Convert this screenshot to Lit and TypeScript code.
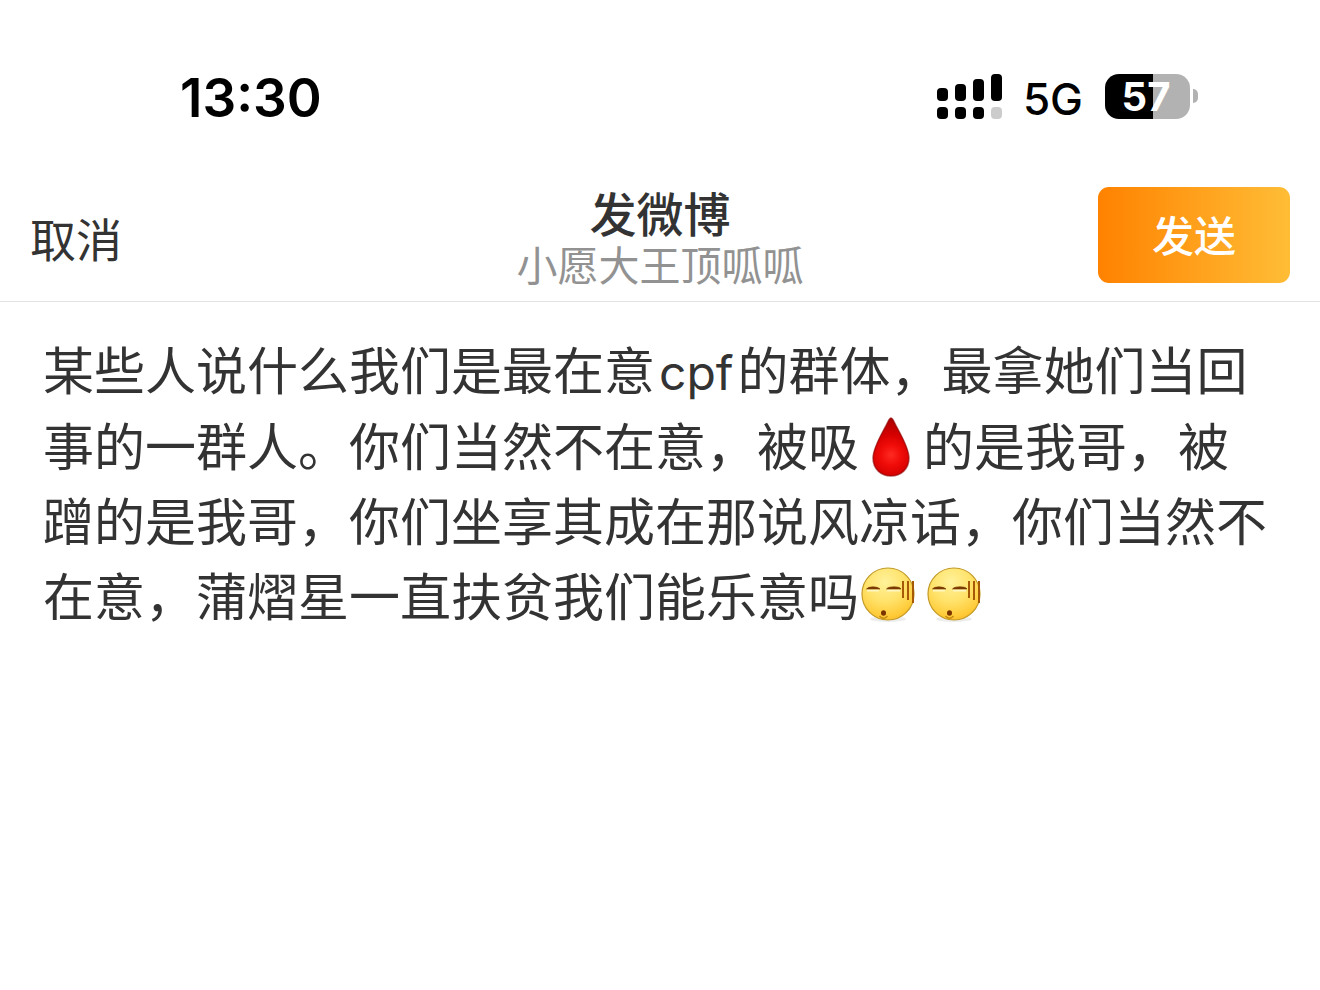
import { LitElement, html, css, svg } from "lit";
import { customElement, property } from "lit/decorators.js";

@customElement("status-bar")
class StatusBar extends LitElement {
  @property() time = "13:30";
  @property({ type: Number }) battery = 57;

  static styles = css`
    :host {
      display: flex;
      align-items: center;
      justify-content: space-between;
      height: 64px;
      padding: 66px 122px 0 180px;
      color: #000;
      font-family: Inter, "Liberation Sans", sans-serif;
    }
    .time {
      font-size: 53px;
      line-height: 64px;
      font-weight: 600;
    }
    .right {
      display: flex;
      align-items: center;
      padding-bottom: 4px;
    }
    .signal {
      display: block;
      width: 65px;
      height: 45px;
    }
    .network {
      margin: 6px 22px 0 21px;
      font-size: 44px;
      line-height: 58px;
      font-weight: 450;
    }
    .battery {
      display: flex;
      align-items: center;
      gap: 3px;
    }
    .cell {
      display: flex;
      align-items: center;
      justify-content: center;
      box-sizing: border-box;
      width: 85px;
      height: 45px;
      padding-right: 3px;
      border-radius: 14px;
      color: #fff;
      font-size: 40px;
      line-height: 45px;
      font-weight: 650;
    }
    .tip {
      width: 5px;
      height: 14px;
      border-radius: 0 5px 5px 0;
      background: #b2b2b2;
    }
  `;

  render() {
    const bars = [
      { x: 0, y: 14, h: 13 },
      { x: 18, y: 10, h: 17 },
      { x: 36, y: 5, h: 22 },
      { x: 54, y: 0, h: 27 },
    ];
    return html`
      <span class="time">${this.time}</span>
      <div class="right">
        <svg class="signal" viewBox="0 0 65 45" aria-hidden="true">
          ${bars.map(
            (b, i) => svg`
              <rect x=${b.x} y=${b.y} width="11" height=${b.h} rx="4"></rect>
              <rect x=${b.x} y="33" width="11" height="12" rx="4" fill=${i === 3 ? "#ccc" : "#000"}></rect>`
          )}
        </svg>
        <span class="network">5G</span>
        <div class="battery">
          <span
            class="cell"
            style="background: linear-gradient(90deg, #000 ${this.battery}%, #b2b2b2 ${this.battery}%)"
            >${this.battery}</span
          >
          <span class="tip"></span>
        </div>
      </div>
    `;
  }
}

@customElement("blood-drop")
class BloodDrop extends LitElement {
  static styles = css`
    :host {
      display: inline-block;
      width: 64px;
      height: 60px;
      vertical-align: -11px;
    }
    .drop {
      display: block;
      width: 38px;
      height: 60px;
      margin: 0 auto;
    }
  `;
  render() {
    return html`
      <svg class="drop" viewBox="0 0 38 60" role="img" aria-label="血">
        <defs>
          <radialGradient id="g" cx="19" cy="38" r="42" gradientUnits="userSpaceOnUse">
            <stop offset="0" stop-color="#ff2a22"></stop>
            <stop offset="0.25" stop-color="#f00c08"></stop>
            <stop offset="0.5" stop-color="#d40000"></stop>
            <stop offset="1" stop-color="#9c0000"></stop>
          </radialGradient>
        </defs>
        <path
          d="M19 1C20 1 21 2.500 22 4.500C27 15 37 30 37 41C37 52 29 59 19 59S1 52 1 41C1 30 11 15 16 4.500C17 2.500 18 1 19 1Z"
          fill="url(#g)"
          stroke="#8a0000"
          stroke-opacity=".6"
          stroke-width="1.500"
        ></path>
      </svg>
    `;
  }
}

@customElement("speechless-face")
class SpeechlessFace extends LitElement {
  static styles = css`
    :host {
      display: inline-block;
      width: 66px;
      height: 58px;
      vertical-align: -8px;
    }
    .face {
      display: block;
      width: 58px;
      height: 58px;
    }
  `;
  render() {
    return html`
      <svg class="face" viewBox="0 0 58 58" role="img" aria-label="无语">
        <defs>
          <radialGradient id="skin" cx="26" cy="16" r="44" gradientUnits="userSpaceOnUse">
            <stop offset="0" stop-color="#fff29a"></stop>
            <stop offset="0.45" stop-color="#ffe26a"></stop>
            <stop offset="0.8" stop-color="#ffc935"></stop>
            <stop offset="1" stop-color="#f0a820"></stop>
          </radialGradient>
        </defs>
        <ellipse cx="29" cy="53" rx="18" ry="3" fill="#000" opacity=".07"></ellipse>
        <circle cx="29" cy="28" r="26" fill="url(#skin)" stroke="#c39a26" stroke-width="1.200"></circle>
        <path d="M8 24.500h12M28 24.500h13" stroke="#fff6c0" stroke-width="2"></path>
        <path d="M7.500 23Q9 20.800 14 20.800T21 23zM27.500 23Q29 20.800 35 20.800T42 23z" fill="#7a3a00" stroke="#7a3a00" stroke-width=".6"></path>
        <path d="M44 15v17M49 15v19M54 15v22" stroke="#a65a08" stroke-width="2"></path>
        <path d="M20.500 50q4 4.500 8 0" stroke="#c98c14" stroke-width="1.500" fill="none"></path>
        <ellipse cx="24.500" cy="47" rx="2.500" ry="2.800" fill="#7a3200"></ellipse>
      </svg>
    `;
  }
}

@customElement("app-root")
class AppRoot extends LitElement {
  static styles = css`
    :host {
      display: flex;
      flex-direction: column;
      min-height: 100vh;
      background: #fff;
      color: #333;
      font-family: Inter, "Noto Sans CJK SC", sans-serif;
    }
    .header {
      display: grid;
      grid-template-columns: 1fr auto 1fr;
      align-items: center;
      margin-top: 38px;
      padding: 0 30px;
      height: 133px;
      border-bottom: 1px solid #e2e2e2;
    }
    button {
      border: 0;
      padding: 0;
      font-family: inherit;
      cursor: pointer;
    }
    .cancel {
      justify-self: start;
      margin-top: 10px;
      background: none;
      color: #333;
      font-size: 46px;
      line-height: 60px;
    }
    .heading {
      display: flex;
      flex-direction: column;
      align-items: center;
      padding-top: 10px;
    }
    .title {
      margin: 0;
      font-size: 47px;
      line-height: 52px;
      font-weight: 500;
    }
    .user {
      margin: 0;
      color: #929292;
      font-size: 41px;
      line-height: 50px;
    }
    .send {
      justify-self: end;
      width: 192px;
      height: 96px;
      padding-top: 4px;
      border-radius: 11px;
      background: linear-gradient(90deg, #ff8200, #ffbd36);
      color: #fff;
      font-size: 42px;
      line-height: 60px;
      font-weight: 500;
    }
    .editor {
      flex: 1;
      padding: 32px 43px;
      outline: none;
      font-size: 51px;
      line-height: 75px;
    }
    .line {
      margin: 0;
    }
    .latin {
      margin: 0 4px;
      font-size: 48px;
    }
  `;

  render() {
    return html`
      <status-bar></status-bar>
      <header class="header">
        <button class="cancel" type="button">取消</button>
        <div class="heading">
          <h1 class="title">发微博</h1>
          <p class="user">小愿大王顶呱呱</p>
        </div>
        <button class="send" type="button">发送</button>
      </header>
      <div class="editor" role="textbox" aria-multiline="true" aria-label="微博正文" contenteditable="true" spellcheck="false">
        <p class="line">某些人说什么我们是最在意<span class="latin">cpf</span>的群体，最拿她们当回</p>
        <p class="line">事的一群人。你们当然不在意，被吸<blood-drop contenteditable="false"></blood-drop>的是我哥，被</p>
        <p class="line">蹭的是我哥，你们坐享其成在那说风凉话，你们当然不</p>
        <p class="line">在意，蒲熠星一直扶贫我们能乐意吗<speechless-face contenteditable="false"></speechless-face><speechless-face contenteditable="false"></speechless-face></p>
      </div>
    `;
  }
}
